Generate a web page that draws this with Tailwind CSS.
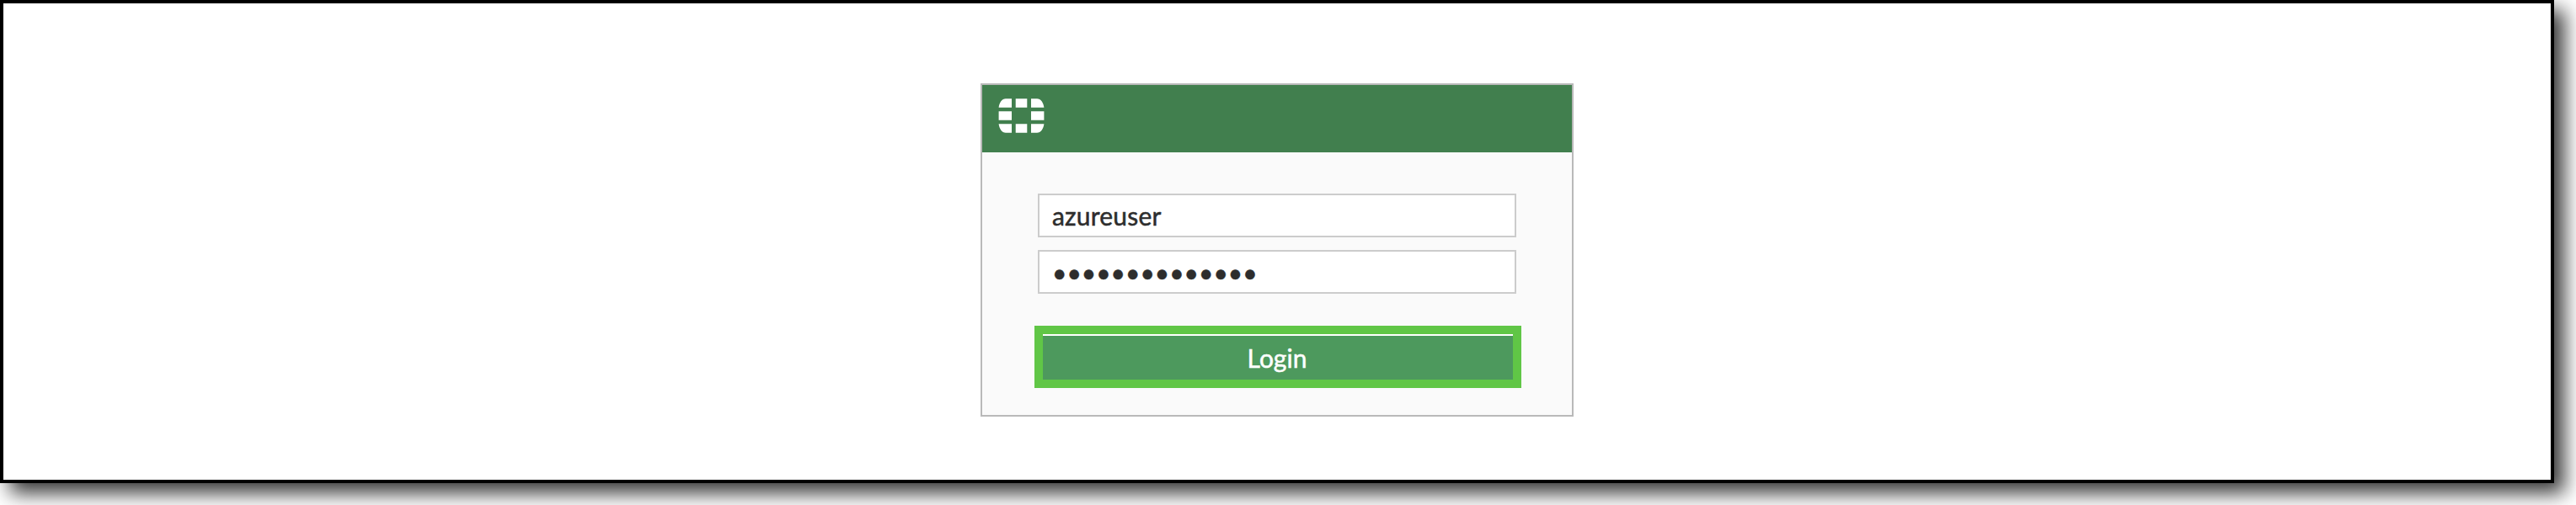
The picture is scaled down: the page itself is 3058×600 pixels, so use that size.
<!DOCTYPE html>
<html lang="en">
<head>
<meta charset="utf-8">
<title>Login</title>
<script src="https://cdn.jsdelivr.net/npm/@tailwindcss/browser@4"></script>
</head>
<body class="bg-white overflow-hidden h-[600px] font-['Lato',sans-serif]">
<main class="w-[3032px] h-[574px] border-4 border-black bg-white shadow-[12px_12px_22px_rgba(0,0,0,0.78)] flex justify-center pt-[95px]">
  <form class="w-[704px] h-[396px] border-2 border-[#b9b9b9] bg-[#fafafa] flex flex-col">
    <header class="h-20 shrink-0 bg-[#417f4e] pl-[19px] pt-4">
      <svg class="w-[55px] h-[41px] block" viewBox="0 0 55 41" fill="#fff" aria-hidden="true">
        <path d="M.6 10.7C1.200 5 4.500 .2 9 .2H16V10.700ZM20.700 .2H34.300V10.700H20.700ZM39 .2H46C50.500 .2 53.800 5 54.400 10.700H39ZM.6 15.300H16V25.800H.6ZM39 15.300H54.400V25.800H39ZM.6 30.300H16V40.800H9C4.500 40.800 1.200 36 .6 30.300ZM20.700 30.300H34.300V40.800H20.700ZM39 30.300H54.400C53.800 36 50.500 40.800 46 40.800H39Z"/>
      </svg>
    </header>
    <div class="pt-[49px] pl-[62px] flex flex-col items-start">
      <div class="ml-1 w-[568px] h-[52px] border-2 border-[#cccccc] bg-white pl-[15px] flex items-center text-[30px] leading-[36px] tracking-[0.2px] text-[#2d2d2d] [-webkit-text-stroke:0.5px_#2d2d2d]">azureuser</div>
      <div class="ml-1 mt-[15px] w-[568px] h-[52px] border-2 border-[#cccccc] bg-white pl-[15px] flex items-center text-[30px] leading-[36px] text-[#2d2d2d] [-webkit-text-stroke:0.5px_#2d2d2d]">••••••••••••••</div>
      <button type="button" class="mt-[38px] w-[578px] h-[74px] border-[10px] border-[#60c646] bg-white pt-0.5"><span class="flex h-[52px] items-center justify-center bg-[#4d995d] pr-[2px] text-[30px] leading-[36px] text-white [-webkit-text-stroke:0.5px_#fff]">Login</span></button>
    </div>
  </form>
</main>
</body>
</html>
